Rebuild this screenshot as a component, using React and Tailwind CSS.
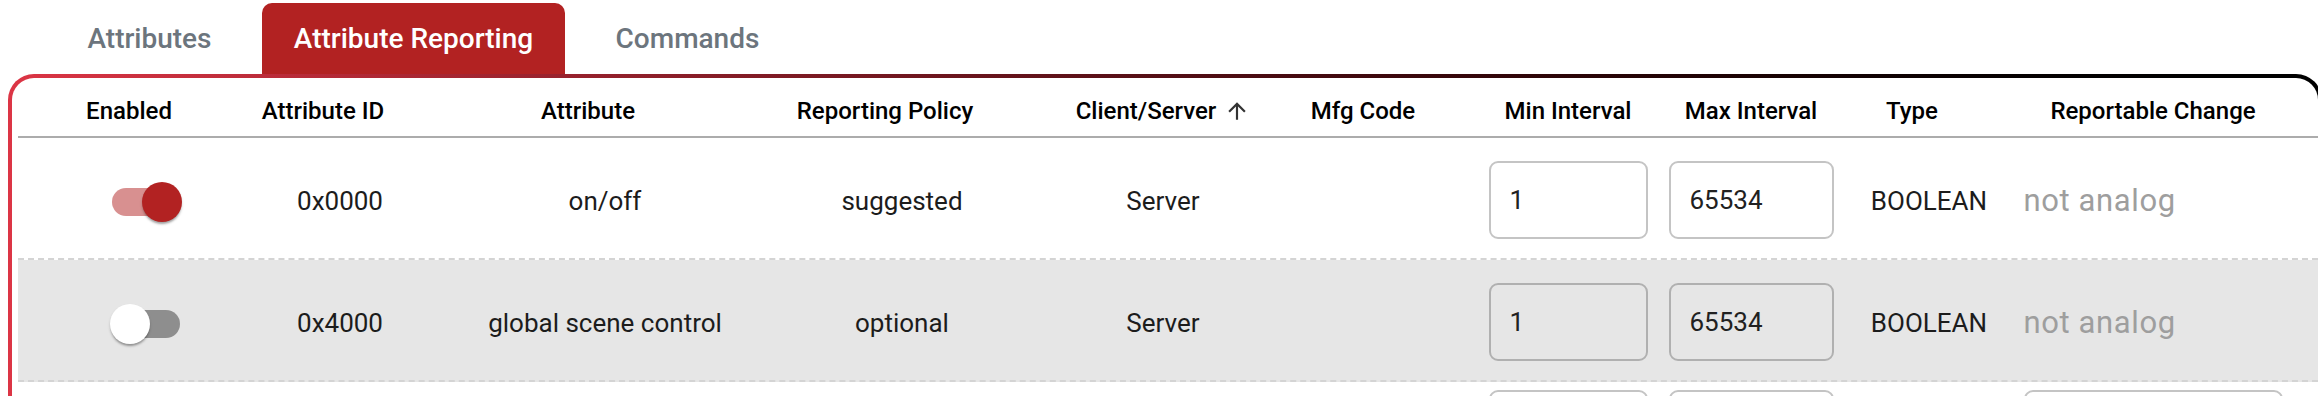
import React from "react";

const GRID =
  "grid grid-cols-[256px_132px_398px_196px_326px_108px_268px_98px_258px_190px]";

const columns = [
  { key: "enabled", label: "Enabled", sortable: true },
  { key: "id", label: "Attribute ID", sortable: true },
  { key: "name", label: "Attribute", sortable: true },
  { key: "policy", label: "Reporting Policy", sortable: true },
  { key: "side", label: "Client/Server", sortable: true, sorted: true },
  { key: "mfg", label: "Mfg Code", sortable: true },
  { key: "min", label: "Min Interval" },
  { key: "max", label: "Max Interval" },
  { key: "type", label: "Type", sortable: true },
  { key: "change", label: "Reportable Change" },
];

const rows = [
  { enabled: true, id: "0x0000", name: "on/off", policy: "suggested", side: "Server", min: "1", max: "65534", type: "BOOLEAN", change: null },
  { enabled: false, id: "0x4000", name: "global scene control", policy: "optional", side: "Server", min: "1", max: "65534", type: "BOOLEAN", change: null },
  // third row is only partly in view: just the tops of its boxes show
  { enabled: false, id: "0x4001", min: "1", max: "65534", change: "0", partial: true },
];

function ArrowUp() {
  return (
    <svg viewBox="0 0 24 24" className="h-[26px] w-[26px] fill-[#333]">
      <path d="M4 12l1.41 1.41L11 7.83V20h2V7.83l5.58 5.59L20 12l-8-8-8 8z" />
    </svg>
  );
}

function Toggle({ on }) {
  return (
    <span className="relative mt-[4px] inline-flex h-[40px] w-[72px] items-center">
      <span
        className={[
          "absolute left-[2px] h-[28px] w-[68px] rounded-full",
          on ? "bg-[#b22222]/50" : "bg-black/[0.38]",
        ].join(" ")}
      />
      <span
        className={[
          "absolute top-0 h-[40px] w-[40px] rounded-full shadow-[0_3px_2px_-1px_rgba(0,0,0,0.25),0_2px_3px_rgba(0,0,0,0.16)]",
          on ? "left-[32px] bg-[#b22222]" : "left-0 bg-white",
        ].join(" ")}
      />
    </span>
  );
}

function NumberBox({ value, width }) {
  return (
    <input
      readOnly
      value={value}
      className={[
        "h-[78px] shrink-0 rounded-[9px] border-2 border-black/[0.23] bg-transparent pl-[19px] text-[26px] text-[#212121] outline-none",
        width,
      ].join(" ")}
    />
  );
}

function Row({ row, shaded }) {
  const last = row.partial;
  const cell = last
    ? "flex h-[78px] items-center justify-center whitespace-nowrap"
    : "flex items-center justify-center whitespace-nowrap";
  const text = cell + " pt-[3px]";

  return (
    <div
      className={[
        GRID,
        "box-content text-[26px] text-[#1c1c1c]",
        last
          ? "h-[120px] items-start pt-[8px]"
          : "h-[116px] items-center border-b-2 border-dashed border-[#d4d4d4] pt-[4px]",
        shaded ? "bg-[#e6e6e6]" : "",
      ].join(" ")}
    >
      <div className={cell}>{last ? null : <Toggle on={row.enabled} />}</div>
      <div className={text}>{row.id && !last ? row.id : null}</div>
      <div className={text}>{row.name}</div>
      <div className={text}>{row.policy}</div>
      <div className={text}>{row.side}</div>
      <div className={cell} />
      <div className={cell}>
        <NumberBox value={row.min} width="w-[159px]" />
      </div>
      <div className={cell}>
        <NumberBox value={row.max} width="w-[165px]" />
      </div>
      <div className={text}>{row.type}</div>
      <div className={cell}>
        {row.change === null ? (
          <div className="w-[259px] shrink-0 pt-[2px] text-left text-[31px] tracking-[0.02em] text-[#9e9e9e]">
            not analog
          </div>
        ) : (
          <NumberBox value={row.change} width="w-[259px]" />
        )}
      </div>
    </div>
  );
}

export default function App() {
  const tabs = [
    { label: "Attributes", width: "w-[187px]" },
    { label: "Attribute Reporting", width: "w-[303px]", active: true },
    { label: "Commands", width: "w-[207px]" },
  ];

  return (
    <div className="h-[396px] w-[2318px] overflow-hidden bg-white font-['Roboto',sans-serif]">
      <div className="flex h-[74px] items-end gap-[19px] pl-[56px]">
        {tabs.map((t) => (
          <div
            key={t.label}
            className={[
              "flex h-[71px] items-center justify-center rounded-t-[10px] text-[28px] font-medium",
              t.width,
              t.active ? "bg-[#b22222] text-white" : "text-[#6c757d]",
            ].join(" ")}
          >
            {t.label}
          </div>
        ))}
      </div>

      <div className="ml-[8px] h-[340px] w-[2314px] rounded-t-[26px] bg-linear-to-r from-[#dc3545] to-black px-[4px] pt-[4px]">
        <div className="h-full rounded-t-[22px] bg-white pl-[6px]">
          <div className={[GRID, "h-[60px] items-center border-b-2 border-[#acacac] pt-[7px] text-[24px] font-medium text-black"].join(" ")}>
            {columns.map((c) => (
              <div key={c.key} className="flex items-center justify-center whitespace-nowrap">
                <span>{c.label}</span>
                {c.sortable ? (
                  <span className={["ml-[8px] flex", c.sorted ? "" : "opacity-0"].join(" ")}>
                    <ArrowUp />
                  </span>
                ) : null}
              </div>
            ))}
          </div>

          {rows.map((row, i) => (
            <Row key={row.id} row={row} shaded={i % 2 === 1} />
          ))}
        </div>
      </div>
    </div>
  );
}
